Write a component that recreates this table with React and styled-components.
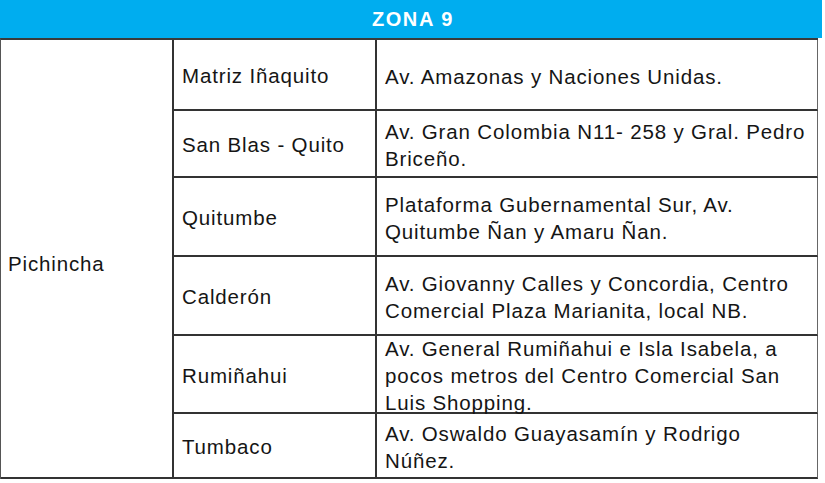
import React from 'react'
import styled, { createGlobalStyle } from 'styled-components'

const GlobalStyle = createGlobalStyle`
  html, body {
    margin: 0;
    padding: 0;
    background: #ffffff;
  }
  body {
    font-family: "Liberation Sans", Arial, Helvetica, sans-serif;
    color: #151515;
  }
`

const offices = [
    { name: 'Matriz Iñaquito', address: ['Av. Amazonas y Naciones Unidas.'], height: 71 },
    { name: 'San Blas - Quito', address: ['Av. Gran Colombia N11- 258 y Gral. Pedro', 'Briceño.'], height: 67 },
    { name: 'Quitumbe', address: ['Plataforma Gubernamental Sur, Av.', 'Quitumbe Ñan y Amaru Ñan.'], height: 79 },
    { name: 'Calderón', address: ['Av. Giovanny Calles y Concordia, Centro', 'Comercial Plaza Marianita, local NB.'], height: 79 },
    { name: 'Rumiñahui', address: ['Av. General Rumiñahui e Isla Isabela, a', 'pocos metros del Centro Comercial San', 'Luis Shopping.'], height: 78 },
    { name: 'Tumbaco', address: ['Av. Oswaldo Guayasamín y Rodrigo', 'Núñez.'], height: 65 },
]

export default function App() {
    return (
        <>
            <GlobalStyle />
            <Page>
                <ZoneHeader>ZONA 9</ZoneHeader>
                <Table $rows={offices.map(o => o.height + 'px').join(' ')}>
                    <ProvinceCell>Pichincha</ProvinceCell>
                    {offices.map((office) => (
                        <React.Fragment key={office.name}>
                            <Cell>{office.name}</Cell>
                            <Cell $last>
                                <Address>
                                    {office.address.map((line) => (
                                        <span key={line}>{line}</span>
                                    ))}
                                </Address>
                            </Cell>
                        </React.Fragment>
                    ))}
                </Table>
            </Page>
        </>
    )
}

const Page = styled.div`
width: 825px;
height: 483px;
overflow: hidden;
`

const ZoneHeader = styled.div`
width: 822px;
height: 38px;
background-color: #00adef;
color: #ffffff;
font-weight: bold;
font-size: 20px;
letter-spacing: 1.6px;
display: flex;
align-items: center;
justify-content: center;
padding-left: 4px;
box-sizing: border-box;
`

const Table = styled.div`
width: 818px;
display: grid;
grid-template-columns: 173px 203px 1fr;
grid-template-rows: ${props => props.$rows};
border-top: 2px solid #3a3a3a;
border-left: 1px solid #555;
box-sizing: border-box;
`

const Cell = styled.div`
display: flex;
align-items: center;
padding: 3px 8px 0;
border-right: ${props => (props.$last ? '1.5px solid #666' : '2px solid #333')};
border-bottom: 2px solid #333;
font-size: 20.5px;
letter-spacing: 0.85px;
white-space: nowrap;
box-sizing: border-box;
`

const ProvinceCell = styled(Cell)`
grid-row: 1 / -1;
padding: 10px 7px 0;
`

const Address = styled.div`
display: flex;
flex-direction: column;
line-height: 27px;
`
